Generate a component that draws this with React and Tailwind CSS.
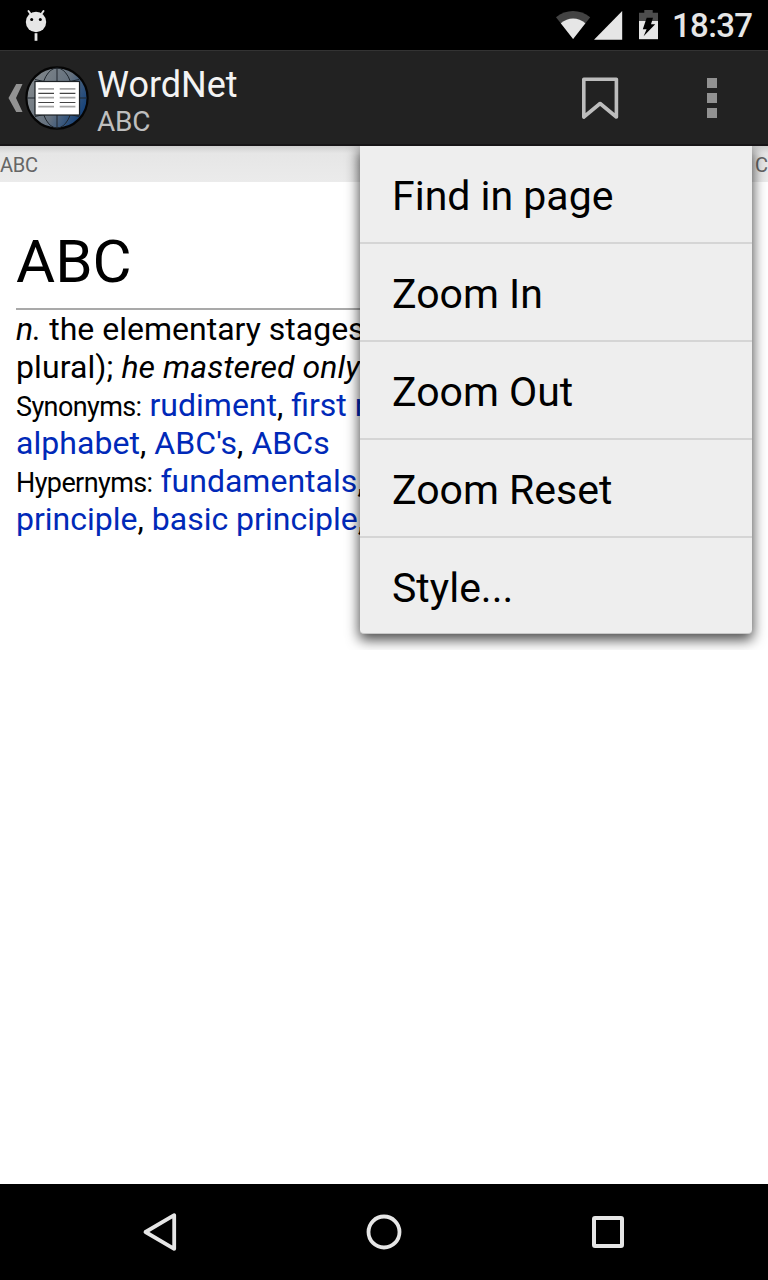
import React from "react";

function StatusBar() {
  return (
    <div className="flex h-[50px] items-start bg-black">
      <svg className="ml-[24px] mt-[8px]" width="24" height="34" viewBox="0 0 24 34">
        <circle cx="12" cy="14" r="10.2" fill="#e6e6e6" />
        <path d="M4.500 3l2.800 4M19.500 3l-2.800 4" stroke="#e6e6e6" strokeWidth="2" strokeLinecap="round" />
        <circle cx="7.7" cy="11.4" r="1.5" fill="#000" />
        <circle cx="16.3" cy="11.4" r="1.5" fill="#000" />
        <path d="M12 25.2v7.6" stroke="#e6e6e6" strokeWidth="2.8" />
      </svg>
      <div className="ml-auto flex items-start">
        <svg className="mt-[8px]" width="104" height="34" viewBox="0 0 104 34">
          <path d="M0 9.2C10 .8 24 .8 34.200 9.200L17.100 31Z" fill="#434343" />
          <path d="M4.800 15.300C12 9 22.300 9 29.400 15.300L17.100 31Z" fill="#e6e6e6" />
          <path d="M66.200 3v28.800H38Z" fill="#e6e6e6" />
          <path d="M83 13V4.800h5.300V2h8.400v2.800h5.300V13Z" fill="#4d4d4d" />
          <path d="M83 13h19v18.200H83Z" fill="#e6e6e6" />
          <path d="M90.700 9.800h6.300l-2 6.400h4.200L87.600 28.300l3-7h-3.800Z" fill="#000" />
        </svg>
        <span className="ml-[12px] mr-[16px] mt-[7px] w-[80px] whitespace-nowrap text-[33px] leading-[38px] tracking-[-0.65px] font-medium text-[#e6e6e6]">18:37</span>
      </div>
    </div>
  );
}

function GlobeIcon() {
  return (
    <svg width="64" height="64" viewBox="0 0 64 64">
      <defs>
        <linearGradient id="globe" x1="0" y1="0.200" x2="1" y2="0.700">
          <stop offset="0" stopColor="#84898c" />
          <stop offset="0.550" stopColor="#66727f" />
          <stop offset="0.780" stopColor="#35557c" />
          <stop offset="1" stopColor="#0d3d79" />
        </linearGradient>
      </defs>
      <circle cx="32" cy="32" r="30.600" fill="url(#globe)" stroke="#050505" strokeWidth="2.200" />
      <g fill="none" stroke="#20272e" strokeWidth="1">
        <path d="M2 32h60M32 2v60M10 13.500Q32 20 54 13.500M10 50.500Q32 44 54 50.500" />
        <ellipse cx="32" cy="32" rx="16" ry="30" />
      </g>
      <rect x="10" y="15.500" width="44.500" height="33.500" fill="#fff" stroke="#1c2024" strokeWidth="1.200" />
      <g strokeWidth="1.700">
        <path d="M13.300 22.800h15.700M34.700 22.800h15.700M13.300 31.700h15.700M34.700 31.700h15.700M13.300 40.700h15.700M34.700 40.700h15.700" stroke="#a5a5a5" />
        <path d="M13.300 27.400h15.700M34.700 27.400h15.700M13.300 36.500h15.700M34.700 36.500h15.700" stroke="#444" strokeWidth="1.200" />
      </g>
    </svg>
  );
}

function ActionBar() {
  return (
    <div className="flex h-[96px] items-center border-t border-b-2 border-t-[#333] border-b-[#171517] bg-[#222]">
      <svg className="ml-[8px] shrink-0" width="15" height="30" viewBox="0 0 15 30">
        <path d="M8.200 1H14.500L8 15L14.500 29H8.200L.500 15Z" fill="#929292" />
      </svg>
      <div className="ml-[2px] h-16 w-16 shrink-0"><GlobeIcon /></div>
      <div className="ml-[8px] flex flex-col pt-[6px]">
        <span className="text-[36px] leading-[42px] text-[#f3f3f3]">WordNet</span>
        <span className="text-[28px] leading-[32px] tracking-[-0.2px] text-[#bebebe]">ABC</span>
      </div>
      <svg className="ml-auto mr-[88px]" width="37" height="44" viewBox="0 0 37 44">
        <path d="M1.800 3.200H34.400V41L18.100 27.500L1.800 41Z" fill="none" stroke="#bdbdbd" strokeWidth="3.600" strokeLinejoin="round" />
      </svg>
      <div className="mr-[51px] flex flex-col gap-[5px]">
        <i className="block h-[10px] w-[10px] bg-[#929292]" />
        <i className="block h-[10px] w-[10px] bg-[#929292]" />
        <i className="block h-[10px] w-[10px] bg-[#929292]" />
      </div>
    </div>
  );
}

function Word({ children }) {
  return <a className="text-[#0029b8]">{children}</a>;
}

function Label({ children }) {
  return <span className="text-[27px] tracking-[-0.6px]">{children}</span>;
}

function Article() {
  return (
    <article className="px-4 pt-[44px] text-black">
      <h1 className="h-[82px] text-[60px] leading-[72px]">ABC</h1>
      <div className="h-[2px] bg-[#a9a9a9]" />
      <div className="overflow-hidden whitespace-nowrap text-[32px] leading-[38px]">
        <p className="h-[38px]"><i>n.</i> the elementary stages</p>
        <p className="h-[38px] tracking-[0.08px]">plural); <i>he mastered only</i></p>
        <p className="h-[38px]"><Label>Synonyms:</Label> <Word>rudiment</Word>, <Word>first r</Word></p>
        <p className="h-[38px] tracking-[0.05px]"><Word>alphabet</Word>, <Word>ABC's</Word>, <Word>ABCs</Word></p>
        <p className="h-[38px]"><Label>Hypernyms:</Label> <Word>fundamentals</Word>,</p>
        <p className="h-[38px]"><Word>principle</Word>, <Word>basic principle</Word>,</p>
      </div>
    </article>
  );
}

const items = ["Find in page", "Zoom In", "Zoom Out", "Zoom Reset", "Style..."];

function Menu() {
  return (
    <div className="absolute left-[340px] top-0 h-[504px] w-[428px] overflow-hidden">
      <ul className="ml-[20px] h-[488px] w-[392px] rounded-b-[4px] border-b border-[#c8c8c8] bg-[#eee] shadow-[0_5px_13px_1px_rgba(0,0,0,0.7)]">
        {items.map((t, i) => (
          <li key={t} className={"flex items-center pl-8 pt-1 text-[41px] leading-[48px] text-black " + (i < 4 ? "h-[98px] border-b-2 border-[#d5d5d5]" : "h-[95px]")}>
            {t}
          </li>
        ))}
      </ul>
    </div>
  );
}

export default function App() {
  return (
    <div className="flex h-[1280px] w-[768px] flex-col overflow-hidden bg-white font-['Roboto',sans-serif]">
      <StatusBar />
      <ActionBar />
      <main className="relative flex-1 overflow-hidden">
        <div className="flex h-[36px] justify-between overflow-hidden bg-linear-to-b from-[#cfcfcf] via-[#e6e6e6] via-20% to-[#ebebeb] text-[20px] leading-[38px] text-[#666]">
          <span className="tracking-[-0.2px]">ABC</span>
          <span className="w-[13px]">C</span>
        </div>
        <Article />
        <Menu />
      </main>
      <nav className="flex h-[96px] items-center justify-between bg-black px-[140px]">
        <svg width="40" height="40" viewBox="0 0 40 40"><path d="M34.200 3.200V36.800L5.500 20Z" fill="none" stroke="#e6e6e6" strokeWidth="3.800" strokeLinejoin="round" /></svg>
        <svg width="40" height="40" viewBox="0 0 40 40"><circle cx="20" cy="20" r="15.500" fill="none" stroke="#e6e6e6" strokeWidth="3.800" /></svg>
        <svg width="40" height="40" viewBox="0 0 40 40"><rect x="6" y="6" width="28" height="28" rx="1" fill="none" stroke="#e6e6e6" strokeWidth="4" /></svg>
      </nav>
    </div>
  );
}
